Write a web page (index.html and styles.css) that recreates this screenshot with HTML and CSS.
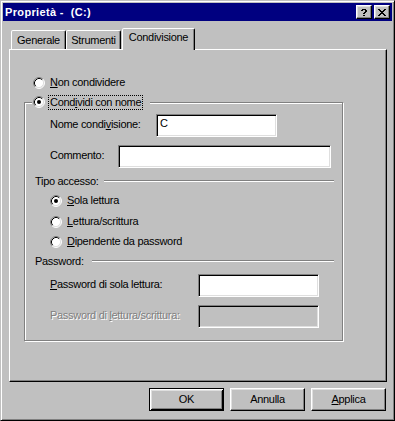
FILE: index.html
```html
<!DOCTYPE html>
<html lang="it">
<head>
<meta charset="utf-8">
<title>Proprietà - (C:)</title>
<link rel="stylesheet" href="styles.css">
</head>
<body>
<div class="window">
  <div class="titlebar">
    <span class="title">Proprietà -  (C:)</span>
    <div class="caption-buttons">
      <div class="cap-btn">
        <svg width="7" height="7" viewBox="0 0 7 7" shape-rendering="crispEdges"><path d="M1 0h4v1h-4z M0 1h2v1h-2z M4 1h2v1h-2z M4 2h2v1h-2z M3 3h2v1h-2z M2 4h2v1h-2z M2 6h2v1h-2z" fill="#000"/></svg>
      </div>
      <div class="cap-btn">
        <svg width="8" height="7" viewBox="0 0 8 7" shape-rendering="crispEdges"><path d="M0 0h2v1h-2z M6 0h2v1h-2z M1 1h2v1h-2z M5 1h2v1h-2z M2 2h4v1h-4z M3 3h2v1h-2z M2 4h4v1h-4z M1 5h2v1h-2z M5 5h2v1h-2z M0 6h2v1h-2z M6 6h2v1h-2z" fill="#000"/></svg>
      </div>
    </div>
  </div>

  <div class="client">
    <div class="tabs">
      <div class="tab tab-first">Generale</div>
      <div class="tab">Strumenti</div>
      <div class="tab tab-active">Condivisione</div>
    </div>

    <div class="panel">
      <div class="radio-row row-top">
        <svg class="radio" width="12" height="12" viewBox="0 0 12 12"><circle cx="6" cy="6" r="5" fill="#fff"/><path d="M2.11 9.89A5.5 5.5 0 0 1 9.89 2.11" fill="none" stroke="#808080"/><path d="M9.89 2.11A5.5 5.5 0 0 1 2.11 9.89" fill="none" stroke="#fff"/><path d="M2.82 9.18A4.5 4.5 0 0 1 9.18 2.82" fill="none" stroke="#000"/><path d="M9.18 2.82A4.5 4.5 0 0 1 2.82 9.18" fill="none" stroke="#dfdfdf"/></svg>
        <span class="rlabel"><u>N</u>on condividere</span>
      </div>

      <div class="group">
        <div class="legend">
          <svg class="radio" width="12" height="12" viewBox="0 0 12 12"><circle cx="6" cy="6" r="5" fill="#fff"/><path d="M2.11 9.89A5.5 5.5 0 0 1 9.89 2.11" fill="none" stroke="#808080"/><path d="M9.89 2.11A5.5 5.5 0 0 1 2.11 9.89" fill="none" stroke="#fff"/><path d="M2.82 9.18A4.5 4.5 0 0 1 9.18 2.82" fill="none" stroke="#000"/><path d="M9.18 2.82A4.5 4.5 0 0 1 2.82 9.18" fill="none" stroke="#dfdfdf"/><circle cx="6" cy="6" r="2" fill="#000"/></svg>
          <span class="rlabel focus">Cond<u>i</u>vidi con nome</span>
        </div>

        <div class="field-row row-name">
          <span class="flabel w-name">Nome condi<u>v</u>isione:</span>
          <div class="edit w-121">C</div>
        </div>

        <div class="field-row row-comment">
          <span class="flabel w-comment">Commento:</span>
          <div class="edit w-213"></div>
        </div>

        <div class="sep-row row-tipo">
          <span class="sep-label">Tipo accesso:</span>
          <span class="sep-line sep-tipo"></span>
        </div>

        <div class="radio-row sub row-r1">
          <svg class="radio" width="12" height="12" viewBox="0 0 12 12"><circle cx="6" cy="6" r="5" fill="#fff"/><path d="M2.11 9.89A5.5 5.5 0 0 1 9.89 2.11" fill="none" stroke="#808080"/><path d="M9.89 2.11A5.5 5.5 0 0 1 2.11 9.89" fill="none" stroke="#fff"/><path d="M2.82 9.18A4.5 4.5 0 0 1 9.18 2.82" fill="none" stroke="#000"/><path d="M9.18 2.82A4.5 4.5 0 0 1 2.82 9.18" fill="none" stroke="#dfdfdf"/><circle cx="6" cy="6" r="2" fill="#000"/></svg>
          <span class="rlabel"><u>S</u>ola lettura</span>
        </div>
        <div class="radio-row sub row-r2">
          <svg class="radio" width="12" height="12" viewBox="0 0 12 12"><circle cx="6" cy="6" r="5" fill="#fff"/><path d="M2.11 9.89A5.5 5.5 0 0 1 9.89 2.11" fill="none" stroke="#808080"/><path d="M9.89 2.11A5.5 5.5 0 0 1 2.11 9.89" fill="none" stroke="#fff"/><path d="M2.82 9.18A4.5 4.5 0 0 1 9.18 2.82" fill="none" stroke="#000"/><path d="M9.18 2.82A4.5 4.5 0 0 1 2.82 9.18" fill="none" stroke="#dfdfdf"/></svg>
          <span class="rlabel"><u>L</u>ettura/scrittura</span>
        </div>
        <div class="radio-row sub row-r3">
          <svg class="radio" width="12" height="12" viewBox="0 0 12 12"><circle cx="6" cy="6" r="5" fill="#fff"/><path d="M2.11 9.89A5.5 5.5 0 0 1 9.89 2.11" fill="none" stroke="#808080"/><path d="M9.89 2.11A5.5 5.5 0 0 1 2.11 9.89" fill="none" stroke="#fff"/><path d="M2.82 9.18A4.5 4.5 0 0 1 9.18 2.82" fill="none" stroke="#000"/><path d="M9.18 2.82A4.5 4.5 0 0 1 2.82 9.18" fill="none" stroke="#dfdfdf"/></svg>
          <span class="rlabel"><u>D</u>ipendente da password</span>
        </div>

        <div class="sep-row row-pw">
          <span class="sep-label">Password:</span>
          <span class="sep-line sep-pw"></span>
        </div>

        <div class="field-row row-pw1">
          <span class="flabel w-pw"><u>P</u>assword di sola lettura:</span>
          <div class="edit w-121"></div>
        </div>

        <div class="field-row row-pw2">
          <span class="flabel w-pw disabled">Password di <u>l</u>ettura/scrittura:</span>
          <div class="edit edit-disabled w-121"></div>
        </div>
      </div>
    </div>

    <div class="buttons">
      <div class="btn btn-default">OK</div>
      <div class="btn">Annulla</div>
      <div class="btn"><u>A</u>pplica</div>
    </div>
  </div>
</div>
</body>
</html>
```

FILE: styles.css
```css
* {
  box-sizing: border-box;
  margin: 0;
  padding: 0;
}

html, body {
  width: 395px;
  height: 421px;
  overflow: hidden;
  background: #c0c0c0;
}

body {
  font-family: "Liberation Sans", Arial, sans-serif;
  font-size: 11px;
  line-height: 13px;
  letter-spacing: -0.3px;
  color: #000;
}

u {
  text-decoration: underline;
  text-underline-offset: 1px;
}

.window {
  width: 395px;
  height: 421px;
  border: 1px solid;
  border-color: #c0c0c0 #000 #000 #c0c0c0;
  box-shadow: inset 1px 1px 0 #fff, inset -1px -1px 0 #808080;
  padding: 2px;
  background: #c0c0c0;
  display: flex;
  flex-direction: column;
}

/* Title bar */
.titlebar {
  height: 18px;
  flex: none;
  background: #000080;
  color: #fff;
  display: flex;
  align-items: center;
  justify-content: space-between;
  padding: 0 2px;
}

.title {
  font-weight: bold;
  letter-spacing: 0.35px;
  white-space: pre;
  padding-top: 1px;
}

.caption-buttons {
  display: flex;
  gap: 2px;
}

.cap-btn {
  width: 16px;
  height: 14px;
  background: #c0c0c0;
  border: 1px solid;
  border-color: #fff #000 #000 #fff;
  box-shadow: inset -1px -1px 0 #808080, inset 1px 1px 0 #dfdfdf;
  display: flex;
  align-items: center;
  justify-content: center;
}

.cap-btn svg {
  display: block;
}

/* Client area */
.client {
  flex: 1;
  display: flex;
  flex-direction: column;
  padding: 7px 5px 8px 6px;
}

/* Tabs */
.tabs {
  height: 21px;
  flex: none;
  display: flex;
  align-items: flex-end;
  padding-left: 2px;
}

.tab {
  width: 55px;
  height: 19px;
  border: 1px solid;
  border-bottom: 0;
  border-color: #fff #000 transparent #fff;
  border-radius: 2px 2px 0 0;
  box-shadow: inset -1px 0 0 #808080;
  background: #c0c0c0;
  display: flex;
  justify-content: center;
  padding-top: 3px;
}

.tab-active {
  width: 73px;
  height: 22px;
  margin-left: 1px;
  margin-bottom: -1px;
  padding-top: 2px;
  position: relative;
  z-index: 1;
}

/* Panel */
.panel {
  height: 333px;
  flex: none;
  border: 1px solid;
  border-color: #fff #000 #000 #fff;
  box-shadow: inset -1px -1px 0 #808080;
  display: flex;
  flex-direction: column;
  align-items: flex-start;
}

.radio-row {
  height: 13px;
  display: flex;
  align-items: flex-start;
}

.radio {
  display: block;
  flex: none;
  margin-top: 1px;
}

.rlabel {
  margin-left: 5px;
  white-space: nowrap;
}

.row-top {
  margin-top: 26px;
  margin-left: 23px;
}

/* Group box */
.group {
  margin-top: 13px;
  margin-left: 14px;
  width: 319px;
  height: 239px;
  border: 1px solid #808080;
  box-shadow: 1px 1px 0 #fff, inset 1px 1px 0 #fff;
  display: flex;
  flex-direction: column;
  align-items: stretch;
}

.legend {
  height: 13px;
  margin-top: -7px;
  margin-left: 7px;
  padding: 0 8px 0 1px;
  background: #c0c0c0;
  align-self: flex-start;
  display: flex;
  align-items: flex-start;
}

.legend .radio {
  margin-top: 0;
}

.focus {
  margin-left: 4px;
  padding: 0 1px;
  outline: 1px dotted #000;
}

.field-row {
  height: 23px;
  display: flex;
  align-items: flex-start;
  padding-left: 25px;
}

.flabel {
  flex: none;
  margin-top: 4px;
  white-space: nowrap;
}

.w-name { width: 106px; }
.w-comment { width: 68px; }
.w-pw { width: 148px; }

.edit {
  height: 23px;
  flex: none;
  background: #fff;
  border: 1px solid;
  border-color: #808080 #fff #fff #808080;
  box-shadow: inset 1px 1px 0 #000, inset -1px -1px 0 #dfdfdf;
  padding: 2px 0 0 3px;
}

.w-121 { width: 121px; }
.w-213 { width: 213px; }

.edit-disabled {
  background: #c0c0c0;
}

.disabled {
  color: #808080;
  text-shadow: 1px 1px 0 #fff;
}

.row-name { margin-top: 5px; }
.row-comment { margin-top: 8px; }

.sep-row {
  height: 13px;
  display: flex;
  align-items: flex-start;
  padding-left: 10px;
  padding-right: 8px;
}

.sep-label {
  white-space: nowrap;
}

.sep-line {
  flex: 1;
  height: 2px;
  margin-top: 5px;
  border-top: 1px solid #808080;
  border-bottom: 1px solid #fff;
}

.sep-tipo { margin-left: 5px; }
.sep-pw { margin-left: 8px; }

.row-tipo { margin-top: 7px; }

.sub {
  padding-left: 25px;
}

.row-r1 { margin-top: 6px; }
.row-r2 { margin-top: 8px; }
.row-r3 { margin-top: 7px; }

.row-pw { margin-top: 7px; }
.row-pw1 { margin-top: 6px; }
.row-pw2 { margin-top: 8px; }

/* Buttons */
.buttons {
  margin-top: 6px;
  display: flex;
  justify-content: flex-end;
  gap: 6px;
  padding-right: 1px;
}

.btn {
  width: 75px;
  height: 23px;
  border: 1px solid;
  border-color: #fff #000 #000 #fff;
  box-shadow: inset -1px -1px 0 #808080, inset 1px 1px 0 #dfdfdf;
  display: flex;
  align-items: center;
  justify-content: center;
}

.btn-default {
  border-color: #000;
  box-shadow: inset 1px 1px 0 #fff, inset -1px -1px 0 #000, inset 2px 2px 0 #dfdfdf, inset -2px -2px 0 #808080;
}
```
